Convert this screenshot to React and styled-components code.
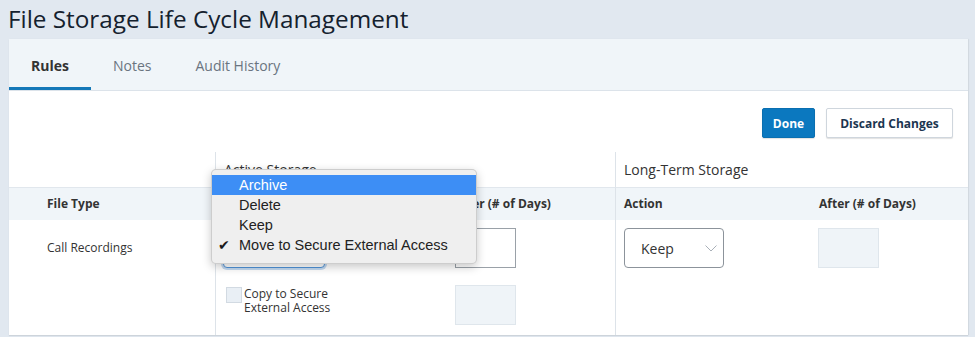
import React from 'react'
import styled, { createGlobalStyle } from 'styled-components'

const GlobalStyle = createGlobalStyle`
  body {
    margin: 0;
    background: #e1e8f0;
    font-family: "Open Sans", "Liberation Sans", sans-serif;
    color: #333;
  }
`

const Page = styled.div`
  width: 975px;
  height: 337px;
  overflow: hidden;
`

const Title = styled.h1`
  margin: 0;
  height: 39px;
  padding-left: 8px;
  font-size: 24.3px;
  font-weight: 400;
  line-height: 37px;
  color: #14212e;
`

const Panel = styled.section`
  margin-left: 9px;
  width: 959px;
  background: #fff;
  box-shadow: 0 1px 1px rgba(0, 0, 0, 0.08), 1px 0 1px rgba(0, 0, 0, 0.05);
`

const TabBar = styled.nav`
  display: flex;
  height: 51px;
  background: #f0f5f9;
  border-bottom: 1px solid #dce3ea;
`

const Tab = styled.div`
  box-sizing: border-box;
  padding: 3px 22px 0;
  font-size: 14px;
  line-height: 48px;
  font-weight: ${p => (p.$active ? 700 : 400)};
  color: ${p => (p.$active ? '#333' : '#6a7480')};
  border-bottom: 3px solid ${p => (p.$active ? '#1478b8' : 'transparent')};
`

const Content = styled.div`
  padding-top: 17px;
`

const Actions = styled.div`
  display: flex;
  justify-content: flex-end;
  gap: 11px;
  padding-right: 15px;
  margin-bottom: 14px;
`

const Button = styled.button`
  box-sizing: border-box;
  width: ${p => p.$width}px;
  height: 30px;
  padding: 0;
  border-radius: 2px;
  font-family: "Open Sans", sans-serif;
  font-size: 12px;
  font-weight: 700;
  cursor: pointer;
  background: ${p => (p.$primary ? '#0b78bf' : '#fff')};
  color: ${p => (p.$primary ? '#fff' : '#1c3550')};
  border: 1px solid ${p => (p.$primary ? '#0a6fb0' : '#cfd6dd')};
  box-shadow: 0 1px 1px rgba(0, 0, 0, 0.12);
`

const Grid = styled.div`
  display: grid;
  grid-template-columns: 206px 231px 169px 194px 159px;
`

const GroupCell = styled.div`
  box-sizing: border-box;
  grid-column: span ${p => p.$span || 1};
  height: 35px;
  padding-left: 8px;
  font-size: 14px;
  line-height: 35px;
  color: #333;
  border-left: ${p => (p.$divider ? '1px solid #dde3e9' : 'none')};
`

const HeadCell = styled.div`
  box-sizing: border-box;
  height: 33px;
  padding-left: ${p => p.$pad}px;
  background: #f0f5f9;
  border-top: 1px solid #e1e7ed;
  font-size: 12px;
  font-weight: 700;
  line-height: 32px;
  color: #333;
  border-left: ${p => (p.$divider ? '1px solid #dde3e9' : 'none')};
`

const BodyCell = styled.div`
  box-sizing: border-box;
  display: flex;
  flex-direction: column;
  align-items: flex-start;
  padding: 8px 0 10px ${p => p.$pad}px;
  font-size: 12px;
  color: #333;
  border-left: ${p => (p.$divider ? '1px solid #dde3e9' : 'none')};
`

const RowLabel = styled.div`
  line-height: 40px;
`

const SelectWrap = styled.div`
  position: relative;
`

const SelectBox = styled.div`
  box-sizing: border-box;
  display: flex;
  align-items: center;
  justify-content: space-between;
  width: ${p => p.$width}px;
  height: 40px;
  padding: 0 6px 0 16px;
  border-radius: 4px;
  font-size: 14px;
  color: #333;
  background: #fff;
  border: 1px solid ${p => (p.$focused ? '#4f93d8' : '#8c939b')};
  box-shadow: ${p => (p.$focused ? '0 0 0 2px rgba(79, 147, 216, 0.35)' : 'none')};
`

const Chevron = () => (
  <svg width="12" height="7" viewBox="0 0 12 7" fill="none">
    <polyline points="0.5,0.5 6,6 11.5,0.5" stroke="#a9b0b8" strokeWidth="1" />
  </svg>
)

const DaysInput = styled.div`
  box-sizing: border-box;
  width: 61px;
  height: 40px;
  margin-top: ${p => p.$gap || 0}px;
  background: ${p => (p.$disabled ? '#eff4f8' : '#fff')};
  border: 1px solid ${p => (p.$disabled ? '#dfe6ec' : '#9aa1a8')};
`

const CheckRow = styled.label`
  display: flex;
  align-items: flex-start;
  gap: 2px;
  margin-top: 19px;
  margin-left: 3px;
  font-size: 12px;
  line-height: 14px;
  color: #333;
`

const CheckBox = styled.span`
  box-sizing: border-box;
  flex: none;
  width: 16px;
  height: 16px;
  background: #e9eff5;
  border: 1px solid #d2dae2;
`

const Menu = styled.ul`
  position: absolute;
  top: -59px;
  left: -12px;
  z-index: 10;
  box-sizing: border-box;
  width: 266px;
  margin: 0;
  padding: 5px 0 8px;
  list-style: none;
  background: #efefef;
  border: 1px solid rgba(0, 0, 0, 0.14);
  border-radius: 5px;
  box-shadow: 0 3px 10px rgba(0, 0, 0, 0.22);
  font-family: "Liberation Sans", Arial, sans-serif;
  font-size: 14.5px;
`

const MenuItem = styled.li`
  display: flex;
  height: 20px;
  line-height: 20px;
  background: ${p => (p.$hover ? '#3d8ef5' : 'transparent')};
  color: ${p => (p.$hover ? '#fff' : '#222')};
  white-space: nowrap;
`

const CheckSlot = styled.span`
  box-sizing: border-box;
  flex: none;
  width: 27px;
  padding-left: 6px;
  font-family: "DejaVu Sans", sans-serif;
  font-size: 14px;
  line-height: 20px;
  color: #1a1a1a;
`

const options = [
  { label: 'Archive', hover: true },
  { label: 'Delete' },
  { label: 'Keep' },
  { label: 'Move to Secure External Access', checked: true },
]

export default function App() {
  return (
    <Page>
      <GlobalStyle />
      <Title>File Storage Life Cycle Management</Title>
      <Panel>
        <TabBar>
          <Tab $active>Rules</Tab>
          <Tab>Notes</Tab>
          <Tab>Audit History</Tab>
        </TabBar>
        <Content>
          <Actions>
            <Button $primary $width={53}>Done</Button>
            <Button $width={127}>Discard Changes</Button>
          </Actions>
          <Grid>
            <GroupCell />
            <GroupCell $span={2} $divider>Active Storage</GroupCell>
            <GroupCell $span={2} $divider>Long-Term Storage</GroupCell>

            <HeadCell $pad={38}>File Type</HeadCell>
            <HeadCell $pad={8} $divider>Action</HeadCell>
            <HeadCell $pad={8}>After (# of Days)</HeadCell>
            <HeadCell $pad={8} $divider>Action</HeadCell>
            <HeadCell $pad={10}>After (# of Days)</HeadCell>

            <BodyCell $pad={38}>
              <RowLabel>Call Recordings</RowLabel>
            </BodyCell>
            <BodyCell $pad={7} $divider>
              <SelectWrap>
                <SelectBox $width={102} $focused>
                  <span />
                  <Chevron />
                </SelectBox>
                <Menu>
                  {options.map(o => (
                    <MenuItem key={o.label} $hover={o.hover}>
                      <CheckSlot>{o.checked ? '✔' : ''}</CheckSlot>
                      {o.label}
                    </MenuItem>
                  ))}
                </Menu>
              </SelectWrap>
              <CheckRow>
                <CheckBox />
                <span>Copy to Secure<br />External Access</span>
              </CheckRow>
            </BodyCell>
            <BodyCell $pad={9}>
              <DaysInput />
              <DaysInput $disabled $gap={17} />
            </BodyCell>
            <BodyCell $pad={8} $divider>
              <SelectBox $width={100}>
                <span>Keep</span>
                <Chevron />
              </SelectBox>
            </BodyCell>
            <BodyCell $pad={9}>
              <DaysInput $disabled />
            </BodyCell>
          </Grid>
        </Content>
      </Panel>
    </Page>
  )
}
